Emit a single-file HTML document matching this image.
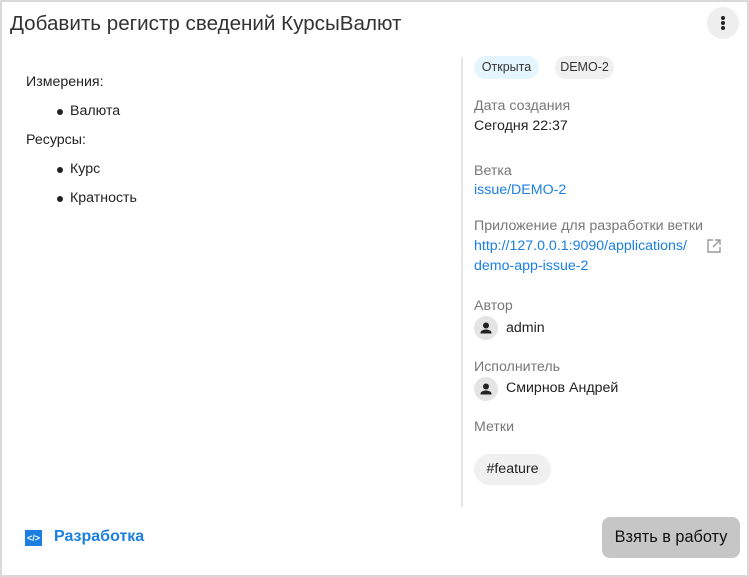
<!DOCTYPE html>
<html><head><meta charset="utf-8"><style>
*{margin:0;padding:0;box-sizing:border-box}
body{width:749px;height:577px;background:#fff;font-family:"Liberation Sans",sans-serif;position:relative;overflow:hidden;color:#222}
.frame{position:absolute;left:0;top:0;width:749px;height:577px;border:2px solid #d9d9d9;border-bottom-width:2px}
.a{position:absolute;white-space:nowrap}
.lbl{color:#777;font-size:14.2px}
.val{font-size:14.2px;color:#222}
.link{font-size:14.2px;color:#1a7fe0}
.dot{position:absolute;width:6px;height:6px;border-radius:50%;background:#222}
.av{position:absolute;width:24px;height:24px;border-radius:50%;background:#e4e4e4}
</style></head><body>
<div class="frame"></div>
<div class="a" style="left:10px;top:12px;font-size:20.6px;color:#333">Добавить регистр сведений КурсыВалют</div>
<div class="a" style="left:707px;top:7px;width:32px;height:32px;border-radius:50%;background:#eee"></div>
<div class="dot" style="left:721px;top:16px;width:4px;height:4px"></div>
<div class="dot" style="left:721px;top:21px;width:4px;height:4px"></div>
<div class="dot" style="left:721px;top:26px;width:4px;height:4px"></div>

<div class="a val" style="left:26px;top:74px">Измерения:</div>
<div class="dot" style="left:57px;top:109px"></div>
<div class="a val" style="left:70px;top:103px">Валюта</div>
<div class="a val" style="left:26px;top:132px">Ресурсы:</div>
<div class="dot" style="left:57px;top:167px"></div>
<div class="a val" style="left:70px;top:161px">Курс</div>
<div class="dot" style="left:57px;top:196px"></div>
<div class="a val" style="left:70px;top:190px">Кратность</div>

<div class="a" style="left:461px;top:57px;width:2px;height:450px;background:#e6e6e6"></div>

<div class="a" style="left:474px;top:56px;width:65px;height:23px;border-radius:12px;background:#e4f5fd;font-size:12.5px;line-height:23px;text-align:center;color:#333">Открыта</div>
<div class="a" style="left:555px;top:56px;width:59px;height:23px;border-radius:12px;background:#f0f0f0;font-size:12.5px;line-height:23px;text-align:center;color:#333">DEMO-2</div>

<div class="a lbl" style="left:474px;top:98px">Дата создания</div>
<div class="a val" style="left:474px;top:118px">Сегодня 22:37</div>
<div class="a lbl" style="left:474px;top:163px">Ветка</div>
<div class="a link" style="left:474px;top:182px">issue/DEMO-2</div>
<div class="a lbl" style="left:474px;top:218px">Приложение для разработки ветки</div>
<div class="a link" style="left:474px;top:238px">http://127.0.0.1:9090/applications/</div>
<div class="a link" style="left:474px;top:258px">demo-app-issue-2</div>
<svg class="a" style="left:706px;top:238px" width="16" height="16" viewBox="0 0 16 16" fill="none" stroke="#999" stroke-width="1.4"><path d="M7 2H2v12h12V9M9 2h5v5M14 2L7 9"/></svg>

<div class="a lbl" style="left:474px;top:298px">Автор</div>
<div class="av" style="left:474px;top:316px"></div>
<svg class="a" style="left:474px;top:316px" width="24" height="24" viewBox="0 0 24 24"><circle cx="12" cy="9.5" r="3" fill="#222"/><path d="M6.5 17c0-2.5 3-3.5 5.5-3.5s5.5 1 5.5 3.5v.5h-11z" fill="#222"/></svg>
<div class="a val" style="left:506px;top:320px">admin</div>
<div class="a lbl" style="left:474px;top:359px">Исполнитель</div>
<div class="av" style="left:474px;top:377px"></div>
<svg class="a" style="left:474px;top:377px" width="24" height="24" viewBox="0 0 24 24"><circle cx="12" cy="9.5" r="3" fill="#222"/><path d="M6.5 17c0-2.5 3-3.5 5.5-3.5s5.5 1 5.5 3.5v.5h-11z" fill="#222"/></svg>
<div class="a val" style="left:506px;top:380px">Смирнов Андрей</div>
<div class="a lbl" style="left:474px;top:419px">Метки</div>
<div class="a" style="left:474px;top:454px;width:77px;height:31px;border-radius:16px;background:#f0f0f0;font-size:14.2px;line-height:31px;text-align:center;color:#222">#feature</div>

<div class="a" style="left:25px;top:530px;width:17px;height:16px;background:#1a7fe0"></div>
<div class="a" style="left:25px;top:530px;width:17px;height:16px;color:#fff;font-size:9px;line-height:16px;text-align:center;font-weight:bold">&lt;/&gt;</div>
<div class="a" style="left:54px;top:528px;font-size:16px;color:#1a7fe0;font-weight:bold">Разработка</div>

<div class="a" style="left:602px;top:517px;width:138px;height:41px;border-radius:8px;background:#c6c6c6;font-size:16.3px;line-height:41px;text-align:center;color:#111">Взять в работу</div>
</body></html>
